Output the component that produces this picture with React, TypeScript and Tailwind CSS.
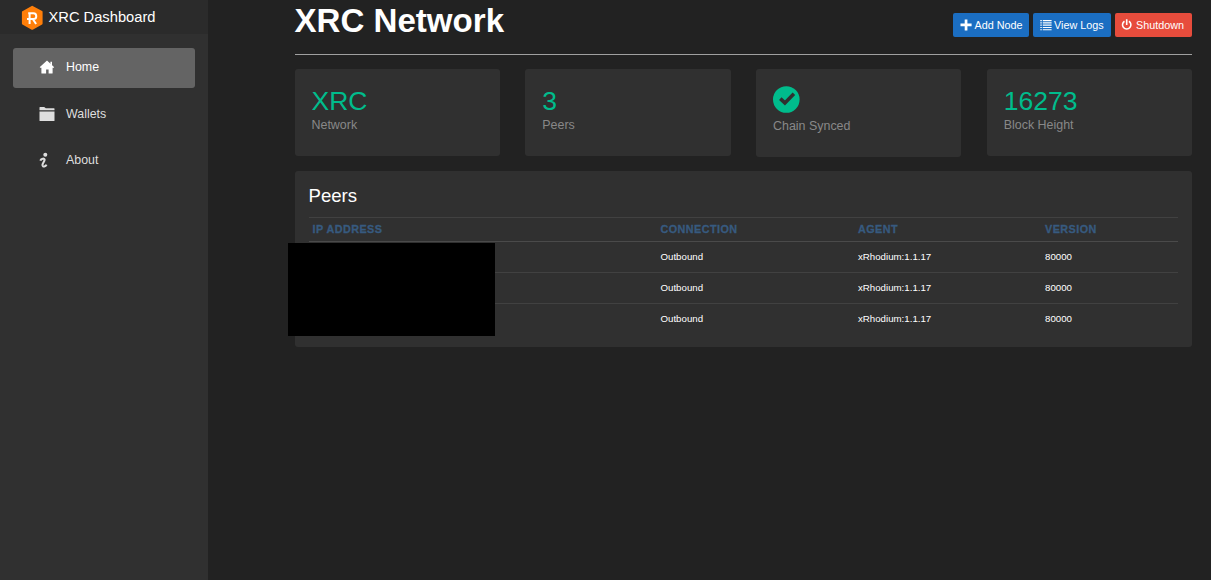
import type { ReactNode } from "react";

function Logo() {
  return (
    <svg viewBox="0 0 22 25" className="h-[25px] w-[22px] shrink-0">
      <path d="M11.2 1.8 20.6 7V18.6L11.2 23.8 1.9 18.6V7Z" fill="#ff7f0a" stroke="#ff7f0a" strokeWidth="2" strokeLinejoin="round" />
      <path d="M7.2 8.3H12.4a2.8 2.8 0 0 1 0 5.7H6M8.6 7.6V19M11.8 14 15.1 19" fill="none" stroke="#fff" strokeWidth="2" />
    </svg>
  );
}

function HomeIcon() {
  return (
    <svg viewBox="0 0 16 14" className="h-[14px] w-[16px]" fill="currentColor">
      <path d="M8 .4 15 6.9Q15.4 7.7 14.6 7.7H13.6V12.9Q13.6 13.4 13.1 13.4H9.6V9.6H7.1V13.4H2.9Q2.4 13.4 2.4 12.9V7.7H1.4Q.6 7.7.9 6.9Z" />
      <path d="M11.4 1.8H13V5H11.4Z" />
    </svg>
  );
}

function FolderIcon() {
  return (
    <svg viewBox="0 0 16 16" className="h-4 w-4" fill="currentColor">
      <path d="M.5 1.4Q.5.9 1 .9H5.2L6.8 2.3H15Q15.5 2.3 15.5 2.8V4.3H.5ZM.5 5.5H15.5V14.6Q15.5 15.1 15 15.1H1Q.5 15.1.5 14.6Z" />
    </svg>
  );
}

function InfoIcon() {
  return (
    <svg viewBox="0 0 16 16" className="h-4 w-4">
      <circle cx="6.3" cy="2.8" r="2" fill="currentColor" />
      <path d="M1.3 8.6C2.2 6.4 5.6 6 5.6 7.8 5.6 9.5 3.3 11.4 3.5 13.2 3.8 15.4 6.6 14.6 7.5 12.6" fill="none" stroke="currentColor" strokeWidth="2.1" />
    </svg>
  );
}

function PlusIcon() {
  return (
    <svg viewBox="0 0 12 12" className="h-3 w-3" fill="currentColor">
      <path d="M4.7.4H7.4V4.6H11.6V7.3H7.4V11.4H4.7V7.3H.5V4.6H4.7Z" />
    </svg>
  );
}

function ListIcon() {
  return (
    <svg viewBox="0 0 12 12" className="h-3 w-3" fill="currentColor">
      <path d="M.3 1H1.8V2.2H.3ZM2.8 1H11.6V2.2H2.8ZM.3 3.3H1.8V4.5H.3ZM2.8 3.3H11.6V4.5H2.8ZM.3 5.6H1.8V6.8H.3ZM2.8 5.6H11.6V6.8H2.8ZM.3 7.9H1.8V9.1H.3ZM2.8 7.9H11.6V9.1H2.8ZM.3 10.2H1.8V11.2H.3ZM2.8 10.2H11.6V11.2H2.8Z" />
    </svg>
  );
}

function PowerIcon() {
  return (
    <svg viewBox="0 0 12 12" className="h-3 w-3" fill="none" stroke="currentColor" strokeWidth="1.6">
      <path d="M3.5 2.2A4.2 4.2 0 1 0 7.9 2.2M5.7.2V6" />
    </svg>
  );
}

function SyncedIcon() {
  return (
    <svg viewBox="0 0 27 27" className="block h-[27px] w-[27px]">
      <circle cx="13.3" cy="13.5" r="13.3" fill="#00bc8c" />
      <path d="M7.3 12.6 11.9 16.9 20.9 7.8" fill="none" stroke="#303030" strokeWidth="3.6" />
    </svg>
  );
}

function NavItem({ icon, label, active }: { icon: ReactNode; label: string; active?: boolean }) {
  return (
    <a className={`flex h-10 items-center rounded-[3px] pl-[26px] text-[12.4px] ${active ? "bg-[#646464] text-white" : "text-[#dedede]"}`}>
      <span className="w-[27px] pb-px">{icon}</span>
      {label}
    </a>
  );
}

function Button({ icon, label, className }: { icon: ReactNode; label: string; className: string }) {
  return (
    <button className={`flex h-6 items-center rounded-[2px] text-[10.8px] text-white ${className}`}>
      {icon}
      <span className="whitespace-nowrap pt-px">{label}</span>
    </button>
  );
}

function Stat({ value, label }: { value: string; label: string }) {
  return (
    <div className="h-[87px] rounded-[3px] bg-[#303030] pl-[17px] pt-[17px]">
      <div className="text-[26.5px] leading-[31px] text-[#00bc8c]">{value}</div>
      <div className="text-[12.45px] leading-[17px] text-[#888]">{label}</div>
    </div>
  );
}

const peers = [1, 2, 3].map((id) => ({ id, connection: "Outbound", agent: "xRhodium:1.1.17", version: "80000" }));
const columns = "grid grid-cols-[348px_197.5px_187px_1fr] pl-[4px]";

export default function App() {
  return (
    <div className="flex h-[580px] w-[1211px] overflow-hidden bg-[#222] font-['Liberation_Sans',Arial,sans-serif] text-white">
      <aside className="w-[207.5px] shrink-0 bg-[#303030]">
        <div className="flex h-[34px] items-center gap-[5.5px] bg-[#2b2b2b] pl-[21px] pt-px text-[14.7px]">
          <Logo />
          <span>XRC Dashboard</span>
        </div>
        <nav className="flex flex-col gap-[6.5px] px-[13px] pt-[13.5px]">
          <NavItem icon={<HomeIcon />} label="Home" active />
          <NavItem icon={<FolderIcon />} label="Wallets" />
          <NavItem icon={<InfoIcon />} label="About" />
        </nav>
      </aside>

      <main className="ml-[87px] w-[897.5px]">
        <header className="flex h-[55px] justify-between border-b border-[#a0a0a0]">
          <h1 className="pt-[2px] text-[33.1px] font-bold leading-[38px]">XRC Network</h1>
          <div className="flex gap-[4px] pt-[12.5px]">
            <Button icon={<PlusIcon />} label="Add Node" className="w-[76.5px] gap-[3px] bg-[#1b6ec2] pl-[7px]" />
            <Button icon={<ListIcon />} label="View Logs" className="w-[78px] gap-[2px] bg-[#1b6ec2] pl-[7px]" />
            <Button icon={<PowerIcon />} label="Shutdown" className="w-[77px] gap-[3px] bg-[#e74c3c] pl-[6px]" />
          </div>
        </header>

        <section className="grid grid-cols-4 items-start gap-[25.5px] pt-[14px]">
          <Stat value="XRC" label="Network" />
          <Stat value="3" label="Peers" />
          <div className="h-[88px] rounded-[3px] bg-[#303030] pl-[17px] pt-[17px]">
            <SyncedIcon />
            <div className="pt-[5px] text-[12.45px] leading-[17px] text-[#888]">Chain Synced</div>
          </div>
          <Stat value="16273" label="Block Height" />
        </section>

        <section className="relative mt-[14px] h-[176px] rounded-[3px] bg-[#303030] px-[14px] pt-[12px]">
          <h2 className="h-[34px] text-[18.6px] leading-[26px]">Peers</h2>
          <div className={`${columns} h-[24px] items-center border-t border-[#414141] text-[10.8px] font-bold tracking-[0.45px] text-[#375a7f] [-webkit-text-stroke:0.3px_#375a7f]`}>
            <span>IP ADDRESS</span>
            <span>CONNECTION</span>
            <span>AGENT</span>
            <span>VERSION</span>
          </div>
          {peers.map((peer, index) => (
            <div
              key={peer.id}
              className={`${columns} h-[31px] items-center border-t text-[9.7px] ${index === 0 ? "border-[#4a4a4a]" : "border-[#414141]"}`}
            >
              <span />
              <span>{peer.connection}</span>
              <span>{peer.agent}</span>
              <span>{peer.version}</span>
            </div>
          ))}
          <div className="absolute -left-[6.5px] top-[72px] h-[93px] w-[207px] bg-black" />
        </section>
      </main>
    </div>
  );
}
